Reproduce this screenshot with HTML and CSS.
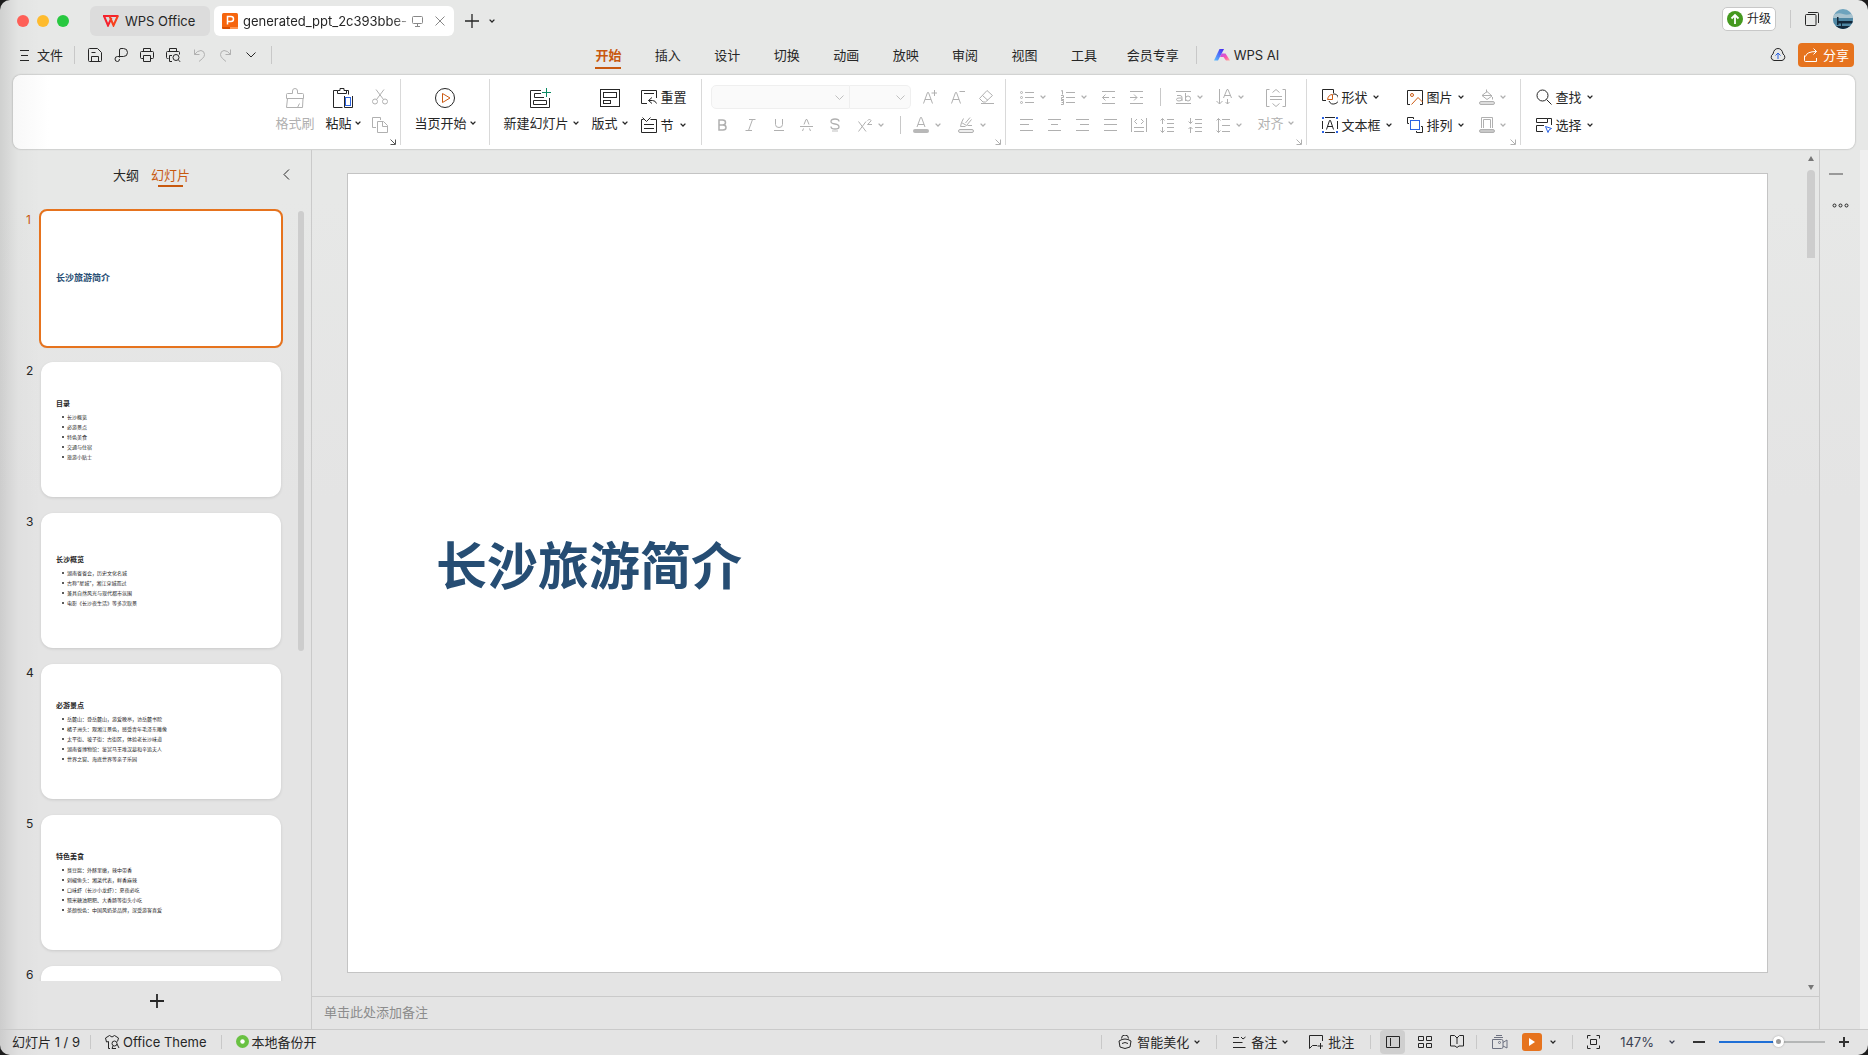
FILE: index.html
```html
<!DOCTYPE html>
<html lang="zh-CN">
<head>
    <meta charset="UTF-8">
    <meta name="viewport" content="width=device-width, initial-scale=1.0">
    <title>WPS Office</title>
    <link rel="stylesheet" href="styles.css">
</head>
<body>
    <!-- Shared icons -->
    <svg class="symbols" aria-hidden="true">
        <symbol id="chev" viewBox="0 0 6 6"><path d="M.6 1.6 3 4 5.4 1.6"/></symbol>
        <symbol id="launch" viewBox="0 0 6 6"><path d="M.5.5 5 5M5.5.5v5h-5"/></symbol>
    </svg>

    <div class="window">
        <!-- Title bar -->
        <header class="titlebar">
            <div class="lights">
                <button class="light red" aria-label="关闭"></button>
                <button class="light yellow" aria-label="最小化"></button>
                <button class="light green" aria-label="全屏"></button>
            </div>
            <button class="doc-tab home-tab">
                <svg width="16" height="12" viewBox="0 0 16 12"><g fill="none" stroke="#f5222d" stroke-width="2"><path d="M0 1h15.5"/><path d="M1 1l4 9.5L8.5 3"/><path d="M6.500 1l4 9.500L14.800 1" stroke="#f8401c"/></g></svg>
                WPS Office
            </button>
            <div class="doc-tab active">
                <svg width="16" height="16" viewBox="0 0 16 16"><rect width="16" height="16" rx="1.500" fill="#f6650d"/><path d="M0 14h8v2H1.500A1.500 1.500 0 0 1 0 14.500z" fill="#d94f00"/><path d="M8 14h8v.5a1.500 1.500 0 0 1-1.500 1.500H8z" fill="#ff944d"/><path d="M5.500 11.500v-8H9a2.250 2.250 0 0 1 0 5H5.500" fill="none" stroke="#fff" stroke-width="1.500"/></svg>
                <span class="doc-name">generated_ppt_2c393bbe-</span>
                <svg class="line muted" width="11" height="11" viewBox="0 0 11 11"><rect x=".5" y=".5" width="10" height="7" rx="1"/><path d="M5.500 7.500v2.500M3 10.500h5"/></svg>
                <button class="close" aria-label="关闭标签"><svg class="line muted" width="10" height="10" viewBox="0 0 10 10"><path d="M.5.5l9 9M9.500.5l-9 9"/></svg></button>
            </div>
            <div class="tab-tools">
                <button aria-label="新建"><svg class="line" width="14" height="14" viewBox="0 0 14 14"><path d="M7 0v14M0 7h14" stroke-width="1.300"/></svg></button>
                <button aria-label="标签列表"><svg class="chev"><use href="#chev"/></svg></button>
            </div>
            <div class="title-right">
                <button class="upgrade"><svg width="16" height="16" viewBox="0 0 16 16"><circle cx="8" cy="8" r="8" fill="#45991f"/><path d="M8 13V4M4.500 7.500 8 4l3.500 3.500" fill="none" stroke="#fff" stroke-width="1.800"/></svg>升级</button>
                <span class="vline"></span>
                <button aria-label="窗口"><svg class="line" width="14" height="14" viewBox="0 0 14 14"><rect x=".5" y="2.500" width="10.500" height="11" rx="1"/><path d="M3 .5h9.500q1 0 1 1V11"/></svg></button>
                <button aria-label="账户"><svg width="20" height="20" viewBox="0 0 20 20"><clipPath id="av"><circle cx="10" cy="10" r="10"/></clipPath><g clip-path="url(#av)"><path d="M0 0h20v20H0z" fill="#6ea3bd"/><path d="M0 6q5-3 10-1t10-1v5H0z" fill="#a9c3cf"/><path d="M0 9h20v11H0z" fill="#4f87a3"/><path d="M5 12h15v2.500H5zM4 8h1.500v8H4zM8 14h1v4H8zM0 17h20v3H0z" fill="#13283a"/></g></svg></button>
            </div>
        </header>

        <!-- Menu bar -->
        <div class="menubar">
            <div class="quick">
                <button class="file"><svg class="line" width="9" height="11" viewBox="0 0 9 11"><path d="M0 .5h9M1 5.500h7M0 10.500h9"/></svg>文件</button>
                <span class="vline"></span>
                <div class="quick-tools">
                    <button aria-label="保存"><svg class="line" width="14" height="14" viewBox="0 0 14 14"><path d="M1.500.5h8l4 4v8q0 1-1 1h-11q-1 0-1-1v-11q0-1 1-1zM3.500 13.500V8.500h7v5M3.500 4.500h4"/></svg></button>
                    <button aria-label="输出"><svg class="line" width="14" height="14" viewBox="0 0 14 14"><path d="M5.500 9.500V2q0-1.500 1.500-1.500h2.500a4 4 0 0 1 0 8h-6a2.200 2.200 0 0 0 0 5Q5.500 13.500 5.500 11"/></svg></button>
                    <button aria-label="打印"><svg class="line" width="14" height="14" viewBox="0 0 14 14"><path d="M3.500 3.500v-3h7v3M3.500 10.500h-2q-1 0-1-1v-5q0-1 1-1h11q1 0 1 1v5q0 1-1 1h-2M3.500 7.500h7v6h-7z"/></svg></button>
                    <button aria-label="打印预览"><svg class="line" width="15" height="14" viewBox="0 0 15 14"><path d="M3.500 3.500v-3h7v3M2.500 10.500h-1q-1 0-1-1v-5q0-1 1-1h11q1 0 1 1v2M6 13.500H3.500v-6H6M12.300 12l2.200 2"/><circle cx="10" cy="9.500" r="3"/></svg></button>
                    <button aria-label="撤销" disabled><svg class="line" width="11" height="13" viewBox="0 0 11 13"><path d="M.5.5v5h5M.5 5.500Q3.500 1.500 7 1.500q3.500.5 3.500 4 0 2-2 4L5 12.500"/></svg></button>
                    <button aria-label="恢复" disabled><svg class="line" width="11" height="13" viewBox="0 0 11 13"><path d="M10.500.5v5h-5M10.500 5.500Q7.500 1.500 4 1.500.500 2 .500 5.500q0 2 2 4L6 12.500"/></svg></button>
                    <button aria-label="更多"><svg class="line" width="10" height="6" viewBox="0 0 10 6"><path d="M.5.5 5 5 9.500.5"/></svg></button>
                </div>
                <span class="vline"></span>
            </div>
            <nav class="menu-tabs">
                <a href="#" class="on">开始</a>
                <a href="#">插入</a>
                <a href="#">设计</a>
                <a href="#">切换</a>
                <a href="#">动画</a>
                <a href="#">放映</a>
                <a href="#">审阅</a>
                <a href="#">视图</a>
                <a href="#">工具</a>
            </nav>
            <div class="menu-extra">
                <a href="#">会员专享</a>
                <span class="vline"></span>
                <a href="#" class="ai"><svg width="16" height="12" viewBox="0 0 16 12"><defs><linearGradient id="g1" x1="0" y1="1" x2="1" y2="0"><stop offset="0" stop-color="#5cc4ff"/><stop offset="1" stop-color="#4420f0"/></linearGradient><linearGradient id="g2" x1="0" y1="0" x2="1" y2="1"><stop offset="0" stop-color="#b44cf5"/><stop offset=".6" stop-color="#ff5aa8"/><stop offset="1" stop-color="#ffb09a"/></linearGradient></defs><path d="M5.500 0H10L4 11.500H0z" fill="url(#g1)"/><path d="M7.500 4.500h4L16 11.500h-4L9.500 8H6z" fill="url(#g2)"/></svg>WPS AI</a>
            </div>
            <div class="menu-right">
                <button aria-label="云同步"><svg class="line" width="16" height="14" viewBox="0 0 16 14"><path d="M4 12.500a3.500 3.500 0 0 1-1-6.500Q4 .5 8 .5T13 6a3.500 3.500 0 0 1-1 6.500z"/><path class="blue" d="M8 11V5M5.500 7.500 8 5l2.500 2.500"/></svg></button>
                <button class="share"><svg class="line" width="14" height="14" viewBox="0 0 14 14"><path d="M.5 7.500v5q0 1 1 1h11V10M1.500 8.500Q2.500 3.500 12.500 3.500M9.500.5l3 3-3 3"/></svg>分享</button>
            </div>
        </div>

        <!-- Ribbon -->
        <section class="ribbon">
            <div class="group clip">
                <button class="big" disabled><svg class="line" width="20" height="20" viewBox="0 0 20 20"><path d="M2.500 5.500h5V3a2.500 2.500 0 0 1 5 0v2.500h5q1 0 1 1v4h-17v-4q0-1 1-1zM2.500 10.500 1.500 19.500h16l.5-9M14.500 15.500l-2 4"/></svg><span>格式刷</span></button>
                <button class="big"><svg class="line" width="20" height="20" viewBox="0 0 20 20"><path d="M4.500 2.500h-4v17h9M15.500 2.500v4M15.500 2.500h-3M4.500 5.500v-3h2.500V.5h4v2h2.500v3z"/><path d="M11.500 8v11.500h8V8"/><rect class="blue" x="12.500" y="9.500" width="5" height="8"/></svg><span>粘贴<svg class="chev"><use href="#chev"/></svg></span></button>
                <div class="stack">
                    <button aria-label="剪切" disabled><svg class="line" width="16" height="16" viewBox="0 0 16 16"><path d="M4 .5l7.500 10M12 .5l-7.500 10"/><circle cx="3" cy="12.500" r="2.500"/><circle cx="13" cy="12.500" r="2.500"/></svg></button>
                    <button aria-label="复制" disabled><svg class="line" width="16" height="16" viewBox="0 0 16 16"><path d="M4 10.500H.5V.5h8V3M5.500 4.500h6l4 4v7h-10zM10.500 4.500v5h5"/></svg></button>
                </div>
                <button class="launcher on" aria-label="剪贴板设置"><svg><use href="#launch"/></svg></button>
            </div>
            <div class="group play">
                <button class="big"><svg class="line" width="20" height="20" viewBox="0 0 20 20"><circle cx="10" cy="10" r="9.500"/><path class="orange" d="M7.500 5.500v9l7.500-4.500z"/></svg><span>当页开始<svg class="chev"><use href="#chev"/></svg></span></button>
            </div>
            <div class="group slides">
                <button class="big"><svg class="line" width="21" height="20" viewBox="0 0 21 20"><path d="M11 2.500H.5v17h19V10M11 5.500H4.500v4H14M3.500 12.500h13v4h-13z"/><path class="teal" d="M16.500 0v9M12 4.500h9"/></svg><span>新建幻灯片<svg class="chev"><use href="#chev"/></svg></span></button>
                <button class="big"><svg class="line" width="20" height="20" viewBox="0 0 20 20"><rect x=".5" y="1.500" width="19" height="17"/><rect x="3.500" y="4.500" width="13" height="5"/><rect x="3.500" y="12.500" width="7" height="3"/></svg><span>版式<svg class="chev"><use href="#chev"/></svg></span></button>
                <div class="stack">
                    <button><svg class="line" width="16" height="16" viewBox="0 0 16 16"><path d="M6 14.500H.5v-13h15V9M3 4.500h10M7.500 11.500 11 8.500M7.500 11.500l3.500 3M7.500 11.500h4q3 0 4 3"/></svg>重置</button>
                    <button><svg class="line" width="16" height="16" viewBox="0 0 16 16"><path d="M2.500 2.500h-2v13h15v-13h-6M1.500.5l4 4 4-4M3 7.500h10M3 11.500h10"/></svg>节<svg class="chev"><use href="#chev"/></svg></button>
                </div>
            </div>
            <div class="group font">
                <div class="row">
                    <div class="picker family"><select aria-label="字体" disabled><option></option></select><svg class="line" width="9" height="5" viewBox="0 0 9 5"><path d="M.5.5l4 4 4-4"/></svg></div>
                    <div class="picker size"><select aria-label="字号" disabled><option></option></select><svg class="line" width="9" height="5" viewBox="0 0 9 5"><path d="M.5.5l4 4 4-4"/></svg></div>
                    <button class="cell" aria-label="增大字号" disabled><svg class="line" width="14" height="14" viewBox="0 0 14 14"><path d="M.5 13.500l4-11h1l4 11M2 9.500h6M11.500 0v6M8.500 3h6"/></svg></button>
                    <button class="cell" aria-label="减小字号" disabled><svg class="line" width="14" height="14" viewBox="0 0 14 14"><path d="M.5 13.500l4-11h1l4 11M2 9.500h6M8.500 1.500h5.500"/></svg></button>
                    <button class="cell" aria-label="清除格式" disabled><svg class="line" width="16" height="14" viewBox="0 0 16 14"><path d="M9 .5l5.500 5L7.500 12H5L1.500 8.500 9 .5zM4.500 5.500l5.500 5M3 13.500h13"/></svg></button>
                </div>
                <div class="row">
                    <button class="cell" aria-label="加粗" disabled><svg class="line" width="9" height="12" viewBox="0 0 9 12"><path stroke-width="1.500" d="M1 1v10h4q3 0 3-2.500T5 6H1h3.500q3 0 3-2.500T4.500 1z"/></svg></button>
                    <button class="cell" aria-label="倾斜" disabled><svg class="line" width="11" height="12" viewBox="0 0 11 12"><path d="M4 .5h6.500M.5 11.500H7M7.500.5l-4 11"/></svg></button>
                    <button class="cell" aria-label="下划线" disabled><svg class="line" width="10" height="12" viewBox="0 0 10 12"><path d="M1.500 0v5.500q0 3 3.500 3t3.500-3V0M0 11.500h10"/></svg></button>
                    <button class="cell" aria-label="删除线" disabled><svg class="line" width="13" height="12" viewBox="0 0 13 12"><path d="M0 7.500h13M4 5.500l2-5h1l2 5M3.500 9.500l-1 2.500M9.500 9.500l1 2.500"/></svg></button>
                    <button class="cell" aria-label="阴影" disabled><svg class="line" width="10" height="14" viewBox="0 0 10 14"><path stroke-width="1.300" d="M9 3.500Q9 1 5 1T1 3.500Q1 5.500 5 6t4 3Q9 11 5 11T1 8.500"/><path stroke-opacity=".4" stroke-width="2" d="M2 13h6"/></svg></button>
                    <button class="drop dd-wide" aria-label="上标" disabled><svg class="line" width="14" height="13" viewBox="0 0 14 13"><path d="M.5 2.500l7.500 10M8 2.500l-7.500 10M9.500 1.500q1-1 2-1t1.500 1q0 1-3.500 4H14"/></svg><svg class="chev"><use href="#chev"/></svg></button>
                    <span class="vline"></span>
                    <button class="drop dd-wide" aria-label="字体颜色" disabled><svg class="line" width="16" height="16" viewBox="0 0 16 16"><path d="M4 10l3.500-9.500h1L12 10M5 7.500h6"/><rect class="fill" x="0" y="12" width="16" height="4" rx="2"/></svg><svg class="chev"><use href="#chev"/></svg></button>
                    <button class="drop dd-wide" aria-label="突出显示" disabled><svg class="line" width="16" height="16" viewBox="0 0 16 16"><path d="M5.500 1.500l-2 4 5 3 5-6M3.500 5.500l-1 4h5M7.500 6l4.500-5.500M9.500 8.500H14"/><rect x=".5" y="12.500" width="15" height="3" rx="1.500" fill="#eee"/></svg><svg class="chev"><use href="#chev"/></svg></button>
                </div>
                <button class="launcher" aria-label="字体设置" disabled><svg><use href="#launch"/></svg></button>
            </div>
            <div class="group para">
                <div>
                    <div class="row">
                        <button class="drop" aria-label="项目符号" disabled><svg class="line" width="14" height="13" viewBox="0 0 14 13"><path d="M5 1.500h9M5 6.500h9M5 11.500h9"/><circle cx="1.500" cy="1.500" r="1"/><circle cx="1.500" cy="6.500" r="1"/><circle cx="1.500" cy="11.500" r="1"/></svg><svg class="chev"><use href="#chev"/></svg></button>
                        <button class="drop" aria-label="编号" disabled><svg class="line" width="14" height="15" viewBox="0 0 14 15"><path d="M5 2.500h9M5 7.500h9M5 12.500h9M0 1l1.500-.5v4M0 5.500h2.500v2H.5v2H3M0 10.500h2.500v4H0M.5 12.500h2"/></svg><svg class="chev"><use href="#chev"/></svg></button>
                        <button class="cell" aria-label="减少缩进" disabled><svg class="line" width="13" height="13" viewBox="0 0 13 13"><path d="M0 .5h13M0 12.500h13M.5 6.500H7M3.500 3.500l-3 3 3 3M10 6.500h3"/></svg></button>
                        <button class="cell" aria-label="增加缩进" disabled><svg class="line" width="13" height="13" viewBox="0 0 13 13"><path d="M0 .5h13M0 12.500h13M0 6.500h7M4 3.500l3 3-3 3M10 6.500h3"/></svg></button>
                        <span class="vline"></span>
                        <button class="drop" aria-label="文字效果" disabled><svg class="line" width="15" height="13" viewBox="0 0 15 13"><path d="M0 .5h15M0 12.500h15M1 4.500h3q2 0 2 2v3.500M6 7H3Q.5 7 .5 8.500T3 10q3 0 3-2M9.500 2v8"/><circle cx="12" cy="7.500" r="2.500"/></svg><svg class="chev"><use href="#chev"/></svg></button>
                        <button class="drop" aria-label="文字方向" disabled><svg class="line" width="16" height="16" viewBox="0 0 16 16"><path d="M3.500 0v15M.5 12l3 3 3-3M7.500 9l3.500-8.500h1L15.500 9M8.500 6.500h6M11.500 10v5M9.500 13l2 2 2-2"/></svg><svg class="chev"><use href="#chev"/></svg></button>
                    </div>
                    <div class="row">
                        <button class="cell" aria-label="左对齐" disabled><svg class="line" width="13" height="12" viewBox="0 0 13 12"><path d="M0 .5h13M0 5.500h9M0 11.500h13"/></svg></button>
                        <button class="cell" aria-label="居中" disabled><svg class="line" width="13" height="12" viewBox="0 0 13 12"><path d="M0 .5h13M3 5.500h7M0 11.500h13"/></svg></button>
                        <button class="cell" aria-label="右对齐" disabled><svg class="line" width="13" height="12" viewBox="0 0 13 12"><path d="M0 .5h13M4 5.500h9M0 11.500h13"/></svg></button>
                        <button class="cell" aria-label="两端对齐" disabled><svg class="line" width="13" height="12" viewBox="0 0 13 12"><path d="M0 .5h13M0 5.500h13M0 11.500h13"/></svg></button>
                        <button class="cell" aria-label="分散对齐" disabled><svg class="line" width="16" height="14" viewBox="0 0 16 14"><path d="M.5 0v14M15.500 0v14M3 9.500h10M3 13.500h10M6 1 3.500 3.500 6 6M10 1l2.500 2.500L10 6"/></svg></button>
                        <button class="cell" aria-label="增加段距" disabled><svg class="line" width="14" height="15" viewBox="0 0 14 15"><path d="M2.500 6V.5M.5 2.500l2-2 2 2M2.500 9v5.500M.5 12.500l2 2 2-2M7 1.500h7M7 5.500h7M7 9.500h7M7 13.500h7"/></svg></button>
                        <button class="cell" aria-label="减少段距" disabled><svg class="line" width="14" height="15" viewBox="0 0 14 15"><path d="M2.500 0v5.500M.5 3.500l2 2 2-2M2.500 15V9M.5 11l2-2 2 2M7 1.500h7M7 5.500h7M7 9.500h7M7 13.500h7"/></svg></button>
                        <button class="drop" aria-label="行距" disabled><svg class="line" width="14" height="15" viewBox="0 0 14 15"><path d="M2.500.5v14M.5 2.500l2-2 2 2M.5 12.500l2 2 2-2M6 1.500h8M6 7.500h8M6 13.500h8"/></svg><svg class="chev"><use href="#chev"/></svg></button>
                    </div>
                </div>
                <button class="big" disabled><svg class="line" width="20" height="18" viewBox="0 0 20 18"><path d="M3.500.5h-3v17h3M16.500.5h3v17h-3M6.500 3.500l3.500-3 3.500 3M6.500 14.500l3.500 3 3.500-3M4 7.500h12M4 10.500h12"/></svg><span>对齐<svg class="chev"><use href="#chev"/></svg></span></button>
                <button class="launcher" aria-label="段落设置" disabled><svg><use href="#launch"/></svg></button>
            </div>
            <div class="group insert">
                <button><svg class="line" width="16" height="16" viewBox="0 0 16 16"><path d="M4 11.500H.5V.5h11V4M7 12a5 5 0 1 0 4-7"/><path class="orange" d="M5.500 10.500h5v-5q-4 0-5 5z"/></svg>形状<svg class="chev"><use href="#chev"/></svg></button>
                <button><svg class="line" width="16" height="15" viewBox="0 0 16 15"><path d="M3 14.500H.5V.5h15v14H13"/><circle class="orange" cx="5" cy="5" r="1.500"/><path class="orange" d="M4.500 14.500l6.500-7 4.500 4.500"/></svg>图片<svg class="chev"><use href="#chev"/></svg></button>
                <button aria-label="填充" disabled><svg class="line" width="16" height="16" viewBox="0 0 16 16"><path d="M7.500.5v3M8 2.500l5 4.500-5 3.500-5-4zM3 6.500h10M13.500 8v2.500"/><rect x=".5" y="12.500" width="15" height="3" rx="1.500" fill="#ddd"/></svg><svg class="chev"><use href="#chev"/></svg></button>
                <button><svg class="line" width="16" height="16" viewBox="0 0 16 16"><path d="M3 .5h10M3 15.500h10M.5 4v8M15.500 4v8M4.500 12.500l3-9h1l3 9M5.500 9.500h5"/><path class="dots" d="M0 0h2v2H0zM14 0h2v2h-2zM0 14h2v2H0zM14 14h2v2h-2z"/></svg>文本框<svg class="chev"><use href="#chev"/></svg></button>
                <button><svg class="line" width="16" height="16" viewBox="0 0 16 16"><path d="M2 6.500H.5v-6h6v1.500M9.500 14v1.500h6v-6H14"/><rect class="blue" x="3.500" y="3.500" width="9" height="9"/></svg>排列<svg class="chev"><use href="#chev"/></svg></button>
                <button aria-label="轮廓" disabled><svg class="line" width="16" height="16" viewBox="0 0 16 16"><path d="M2.500 11V.5h11V11M4.500 11V2.500h7V11"/><rect x=".5" y="12.500" width="15" height="3" rx="1.500" fill="#c8c8c8"/></svg><svg class="chev"><use href="#chev"/></svg></button>
                <button class="launcher" aria-label="对象设置" disabled><svg><use href="#launch"/></svg></button>
            </div>
            <div class="group edit">
                <button><svg class="line" width="16" height="16" viewBox="0 0 16 16"><circle cx="6.500" cy="6.500" r="5.500"/><path d="M10.500 10.500l5 5"/></svg>查找<svg class="chev"><use href="#chev"/></svg></button>
                <button><svg class="line" width="16" height="16" viewBox="0 0 16 16"><path d="M.5 5.500v-4h11v4zM11.500 1.500h4V8M7 14.500H.5v-6H8"/><path class="blue" d="M9.500 9.500l6 2-2.500 1.500-1 2.500z"/></svg>选择<svg class="chev"><use href="#chev"/></svg></button>
            </div>
        </section>

        <main class="workspace">
            <!-- Thumbnail panel -->
            <aside class="panel">
                <div class="panel-head">
                    <div class="panel-tabs">
                        <button>大纲</button>
                        <button class="on">幻灯片</button>
                    </div>
                    <button class="collapse" aria-label="收起"><svg class="line" width="7" height="11" viewBox="0 0 7 11"><path d="M6 .5l-5 5 5 5"/></svg></button>
                </div>
                <div class="panel-body">
                    <ol class="thumbs">
                        <li class="on"><span class="num">1</span>
                            <div class="thumb"><h1>长沙旅游简介</h1></div>
                        </li>
                        <li><span class="num">2</span>
                            <div class="thumb">
                                <h2>目录</h2>
                                <ul><li>长沙概览</li><li>必游景点</li><li>特色美食</li><li>交通与住宿</li><li>旅游小贴士</li></ul>
                            </div>
                        </li>
                        <li><span class="num">3</span>
                            <div class="thumb">
                                <h2>长沙概览</h2>
                                <ul><li>湖南省省会，历史文化名城</li><li>古称“星城”，湘江穿城而过</li><li>兼具自然风光与现代都市氛围</li><li>电影《长沙夜生活》等多次取景</li></ul>
                            </div>
                        </li>
                        <li><span class="num">4</span>
                            <div class="thumb">
                                <h2>必游景点</h2>
                                <ul><li>岳麓山：登岳麓山，游爱晚亭，访岳麓书院</li><li>橘子洲头：观湘江景色，感受青年毛泽东雕像</li><li>太平街、坡子街：古街区，体验老长沙味道</li><li>湖南省博物馆：鉴赏马王堆汉墓和辛追夫人</li><li>世界之窗、海底世界等亲子乐园</li></ul>
                            </div>
                        </li>
                        <li><span class="num">5</span>
                            <div class="thumb">
                                <h2>特色美食</h2>
                                <ul><li>臭豆腐：外酥里嫩，辣中带香</li><li>剁椒鱼头：湘菜代表，鲜香麻辣</li><li>口味虾（长沙小龙虾）：夏夜必吃</li><li>糯米糖油粑粑、大香肠等街头小吃</li><li>茶颜悦色：中国风奶茶品牌，深受游客喜爱</li></ul>
                            </div>
                        </li>
                        <li><span class="num">6</span><div class="thumb"></div></li>
                    </ol>
                    <div class="panel-scroll"></div>
                </div>
                <button class="add" aria-label="新建幻灯片"><svg class="line" width="14" height="14" viewBox="0 0 14 14"><path d="M7 0v14M0 7h14" stroke-width="1.800"/></svg></button>
            </aside>

            <!-- Slide canvas -->
            <div class="editor">
                <div class="stage">
                    <div class="canvas"><div class="slide"><h1>长沙旅游简介</h1></div></div>
                    <div class="vscroll">
                        <svg width="6" height="5" viewBox="0 0 6 5"><path d="M3 0l3 5H0z" fill="#777"/></svg>
                        <div class="track"></div>
                        <svg width="6" height="5" viewBox="0 0 6 5"><path d="M3 5 0 0h6z" fill="#777"/></svg>
                    </div>
                </div>
                <textarea class="notes" rows="1" aria-label="备注" placeholder="单击此处添加备注"></textarea>
            </div>

            <div class="side">
                <button aria-label="收起侧栏"><svg width="14" height="2"><path d="M0 1h14" stroke="#999" stroke-width="2"/></svg></button>
                <button aria-label="更多"><svg class="line" width="17" height="5" viewBox="0 0 17 5"><circle cx="2.500" cy="2.500" r="1.500"/><circle cx="8.500" cy="2.500" r="1.500"/><circle cx="14.500" cy="2.500" r="1.500"/></svg></button>
            </div>
            <div class="edge"></div>
        </main>

        <!-- Status bar -->
        <footer class="status">
            <div class="status-left">
                <span>幻灯片 1 / 9</span>
                <span class="vline"></span>
                <button><svg class="line" width="15" height="14" viewBox="0 0 15 14"><path d="M5 13.500H3.500V6.500l-2 .5-1-4 4-2.500q2.500 3 5 0l4 2.500-1 3.500M12 9l2 4"/><circle cx="9.500" cy="8.500" r="2.500"/><path d="M8 11l-1 2.500h4"/></svg>Office Theme</button>
                <span class="vline"></span>
                <button class="backup"><svg width="13" height="13" viewBox="0 0 13 13"><circle cx="6.500" cy="6.500" r="6.500" fill="#69c142"/><circle cx="6.500" cy="6.500" r="2.200" fill="#fff"/></svg>本地备份开</button>
            </div>
            <div class="status-right">
                <span class="vline"></span>
                <button><svg class="line" width="14" height="14" viewBox="0 0 14 14"><path d="M3.500 3.500a3.500 3.500 0 0 1 7 0M1 6q6-4 12 0L12 12q-5 3-10 0zM4 8.500q3-2 6 0"/></svg>智能美化<svg class="chev"><use href="#chev"/></svg></button>
                <span class="vline"></span>
                <button><svg class="line" width="13" height="12" viewBox="0 0 13 12"><path d="M0 1.500h6M8 1l2 2 2.500-2M0 6.500h9.500M0 11.500h12.500"/></svg>备注<svg class="chev"><use href="#chev"/></svg></button>
                <button class="comment"><svg class="line" width="14" height="14" viewBox="0 0 14 14"><path d="M13.500 6V.5H.5v13l3-3H8M11.500 8v6M8.500 11h5.500"/></svg>批注</button>
                <span class="vline"></span>
                <div class="views">
                    <button class="on" aria-label="普通视图"><svg class="line" width="14" height="12" viewBox="0 0 14 12"><path d="M.5.5h13v11H.5zM4.500 2v8"/></svg></button>
                    <button aria-label="幻灯片浏览"><svg class="line" width="14" height="12" viewBox="0 0 14 12"><path d="M.5.5h5v4h-5zM8.500.5h5v4h-5zM.5 7.500h5v4h-5zM8.500 7.500h5v4h-5z"/></svg></button>
                    <button aria-label="阅读视图"><svg class="line" width="14" height="13" viewBox="0 0 14 13"><path d="M7 12.500 5 11H.5V.5h4L7 3 9.500.5h4V11H9zM7 3v6"/></svg></button>
                </div>
                <span class="vline"></span>
                <button class="rec" aria-label="录制"><svg class="line" width="16" height="14" viewBox="0 0 16 14"><path d="M.5 4.500h9q1.500 0 1.500 1.500v6q0 1.500-1.500 1.500h-9zM11 7.500l4-2.500v8l-4-2M2 2.500h9M4 .5h6"/><circle cx="7.500" cy="7.500" r="1"/></svg></button>
                <button class="show" aria-label="放映"><svg width="6" height="8" viewBox="0 0 6 8"><path d="M0 0l6 4-6 4z" fill="#fff"/></svg></button>
                <button aria-label="放映选项"><svg class="chev"><use href="#chev"/></svg></button>
                <span class="vline"></span>
                <button class="fit" aria-label="适应窗口"><svg class="line" width="13" height="14" viewBox="0 0 13 14"><path d="M3.500.5h-3v3M9.500.5h3v3M3.500 13.500h-3v-3M9.500 13.500h3v-3M3.500 4.500h6v5h-6z"/></svg></button>
                <button class="zoom">147%<svg class="chev"><use href="#chev"/></svg></button>
                <div class="zoombar">
                    <button aria-label="缩小"><svg width="12" height="12"><path d="M0 6h12" stroke="#333" stroke-width="2"/></svg></button>
                    <input type="range" min="0" max="100" value="57" aria-label="缩放">
                    <button aria-label="放大"><svg width="10" height="10"><path d="M0 5h10M5 0v10" stroke="#333" stroke-width="2"/></svg></button>
                </div>
            </div>
        </footer>
    </div>
</body>
</html>
```

FILE: styles.css
```css
* { box-sizing: border-box; }

body {
    margin: 0;
    background: #1c1c1c;
    font-family: Inter, "Noto Sans CJK SC", sans-serif;
    font-size: 13px;
    line-height: 20px;
    color: #262626;
}

button {
    display: inline-flex;
    align-items: center;
    padding: 0;
    border: none;
    background: none;
    font: inherit;
    color: inherit;
    white-space: nowrap;
}

button:disabled { color: #b0b0b0; }

a { color: inherit; text-decoration: none; }

svg { display: block; flex: none; }

.symbols { display: none; }

.line { fill: none; stroke: currentColor; }
.line .blue { stroke: #2b63e3; }
.line .orange { stroke: #cc5a12; }
.line .teal { stroke: #0b8a63; }
.line .fill { fill: #b8b8b8; stroke: none; }
.line .dots { fill: #2b63e3; stroke: none; }
.muted { color: #888; }

.chev {
    width: 6px;
    height: 6px;
    margin-left: 4px;
    fill: none;
    stroke: currentColor;
    stroke-width: 1.3;
}

.vline { width: 1px; height: 18px; background: #c8c8c8; }

.window {
    display: flex;
    flex-direction: column;
    height: 100vh;
    border-radius: 10px;
    overflow: hidden;
    background:
        linear-gradient(90deg, rgba(0, 0, 0, 0.1), rgba(0, 0, 0, 0.02) 18px, transparent 40px),
        linear-gradient(#e7e8e7, #e7e8e7 200px, #e4e4e4 500px);
}

/* Title bar */
.titlebar {
    display: flex;
    align-items: center;
    height: 42px;
    padding: 0 15px 0 17px;
}

.lights { display: flex; gap: 8px; width: 73px; }
.light { width: 12px; height: 12px; border-radius: 50%; }
.red { background: #fe5f57; }
.yellow { background: #febb2e; }
.green { background: #28c840; }

.doc-tab {
    display: flex;
    align-items: center;
    height: 30px;
    border-radius: 6px;
}

.home-tab {
    width: 120px;
    padding-left: 13px;
    gap: 6px;
    background: #dcdcdc;
}

.active {
    width: 240px;
    margin-left: 4px;
    padding: 0 11px 0 8px;
    gap: 5px;
    background: #fff;
}

.doc-name {
    flex: 1;
    white-space: nowrap;
    mask-image: linear-gradient(90deg, #000 150px, rgba(0, 0, 0, 0.4) 164px);
}

.close { margin-left: 7px; }

.tab-tools { display: flex; gap: 6px; margin-left: 11px; }

.title-right { display: flex; align-items: center; align-self: flex-start; gap: 14px; height: 38px; margin-left: auto; }

.upgrade {
    height: 24px;
    padding: 0 4px;
    gap: 4px;
    font-size: 12px;
    background: #fff;
    border: 1px solid #c8c8c8;
    border-radius: 5px;
}

/* Menu bar */
.menubar {
    display: flex;
    align-items: center;
    height: 26px;
    margin-bottom: 7px;
    padding-right: 14px;
}

.quick {
    flex: 1;
    display: flex;
    align-items: center;
    padding-left: 20px;
}
.file { width: 54px; gap: 8px; }
.quick-tools { display: flex; align-items: center; width: 196px; padding-left: 7px; }
.quick-tools button { justify-content: center; width: 26px; height: 26px; }

.menu-tabs { display: grid; grid-template-columns: repeat(9, 1fr); width: 535px; text-align: center; }
.menu-tabs .on { color: #c8590f; font-weight: 700; }
.menu-tabs .on::after {
    content: "";
    display: block;
    width: 26px;
    height: 2px;
    margin: 2px auto -4px;
    background: #c8590f;
}

.menu-extra { display: flex; align-items: center; gap: 17px; padding-left: 13px; margin-right: 16px; }
.ai { display: flex; align-items: center; gap: 4px; }

.menu-right { flex: 1; display: flex; align-items: center; justify-content: flex-end; gap: 12px; }
.share {
    height: 24px;
    padding: 0 5px 0 6px;
    gap: 5px;
    border-radius: 4px;
    background: #e6731e;
    color: #fff;
}

/* Ribbon */
.ribbon {
    display: flex;
    justify-content: center;
    height: 74px;
    margin: 0 13px 1px;
    border-radius: 8px;
    background: linear-gradient(90deg, #f8f8f8, #fff 36px);
    box-shadow: 0 0 2px rgba(0, 0, 0, 0.35);
}

.group {
    position: relative;
    display: flex;
    margin: 4px 0;
    padding-top: 4px;
    border-right: 1px solid #d9d9d9;
}

.big { flex-direction: column; height: 56px; padding-top: 5px; gap: 5px; }
.big svg.line { height: 20px; }
.big span { display: flex; align-items: center; }

.stack { display: flex; flex-direction: column; }
.stack button { height: 28px; gap: 4px; }
.stack .chev { margin-left: 2px; }

.clip { padding-right: 12px; gap: 11px; }
.play { padding: 4px 13px 0; }
.slides { padding: 4px 14px 0 13px; gap: 13px; }

.launcher { position: absolute; right: 4px; bottom: 0; }
.launcher svg { width: 6px; height: 6px; fill: none; stroke: #b0b0b0; }
.launcher.on svg { stroke: #555; }

.row { display: flex; align-items: center; height: 28px; }
.cell { justify-content: center; width: 28px; height: 28px; }
.drop { justify-content: center; width: 41px; height: 28px; }
.drop .chev { margin-left: 6px; }
.dd-wide { width: 45px; }
.row .vline { margin: 0 8px 0 9px; }

.font { flex-direction: column; padding-left: 7px; width: 304px; }
.font .vline { margin: 0 4px 0 6px; }

.picker { display: grid; align-items: center; height: 24px; }
.picker select {
    grid-area: 1 / 1;
    width: 100%;
    height: 24px;
    appearance: none;
    background: #f8f8f8;
    border: 1px solid #e9e9e9;
}
.picker svg { grid-area: 1 / 1; justify-self: end; margin-right: 6px; color: #c0c0c0; z-index: 1; }
.family { width: 139px; margin-left: 2px; }
.family select { border-radius: 5px 0 0 5px; }
.size { width: 61px; margin-right: 5px; }
.size select { border-left: none; border-radius: 0 5px 5px 0; }

.para { padding-left: 7px; width: 301px; gap: 7px; }

.insert {
    display: grid;
    grid-template-columns: 85px 72px 41px;
    grid-template-rows: 28px 28px;
    padding-left: 15px;
}
.insert button, .edit button { gap: 4px; }
.insert .chev, .edit .chev { margin-left: 1px; }
.edit { flex-direction: column; padding-left: 15px; border: none; }
.edit button { height: 28px; }

/* Workspace */
.workspace { flex: 1; display: flex; min-height: 0; }

.panel {
    display: flex;
    flex-direction: column;
    width: 312px;
    border-right: 1px solid #cacaca;
}

.panel-head {
    display: flex;
    align-items: center;
    height: 49px;
    padding: 0 21px 0 113px;
}
.panel-tabs { display: flex; flex: 1; gap: 12px; }
.panel-tabs .on { position: relative; color: #c8590f; }
.panel-tabs .on::after {
    content: "";
    position: absolute;
    left: 7px;
    right: 7px;
    bottom: -2px;
    height: 2px;
    background: #c8590f;
}

.panel-body { flex: 1; display: flex; min-height: 0; padding-top: 10px; }

.thumbs {
    flex: 1;
    display: flex;
    flex-direction: column;
    gap: 16px;
    margin: 0;
    padding: 2px 0 0 24px;
    list-style: none;
    overflow: hidden;
}
.thumbs > li { display: flex; }
.num { width: 17px; padding-left: 2px; font-size: 12px; line-height: 18px; }
.thumbs .on .num { color: #c8590f; }

.thumb {
    display: flex;
    flex-direction: column;
    justify-content: center;
    width: 240px;
    height: 135px;
    flex: none;
    padding-left: 15px;
    border-radius: 12px;
    background: #fff;
    box-shadow: 0 1px 3px rgba(0, 0, 0, 0.12);
}
.on .thumb { border-radius: 6px; outline: 2px solid #e6731e; }
.thumb h1 { margin: 0 0 2px; font-size: 9px; line-height: 12px; color: #264d73; }
.thumb h2 { margin: 0 0 1px; font-size: 7px; line-height: 14px; }
.thumb ul {
    margin: 0;
    padding-left: 6px;
    list-style: none;
    font-size: 5px;
    line-height: 10px;
}
.thumb ul li { display: flex; align-items: center; gap: 3px; }
.thumb ul li::before {
    content: "";
    width: 2px;
    height: 2px;
    border-radius: 1px;
    background: #262626;
}

.panel-scroll { width: 6px; height: 440px; margin: 2px 7px 0 0; border-radius: 3px; background: #cdcdcd; }

.add { align-self: center; height: 40px; margin: 0 0 8px 2px; }

.editor { flex: 1; display: flex; flex-direction: column; min-width: 0; border-right: 1px solid #cacaca; }
.stage { flex: 1; display: flex; min-height: 0; }
.canvas { flex: 1; padding: 23px 35px; }

.slide {
    display: flex;
    align-items: center;
    height: 100%;
    padding: 0 0 12px 88px;
    background: #fff;
    border: 1px solid #c4c4c4;
}
.slide h1 { margin: 0; font-size: 51px; line-height: 64px; color: #264d73; }

.vscroll { display: flex; flex-direction: column; align-items: center; width: 16px; padding: 6px 0; }
.track { flex: 1; width: 8px; margin-top: 9px; background: linear-gradient(#cdcdcd, #cdcdcd) no-repeat; background-size: 8px 88px; border-radius: 4px; }

.notes {
    height: 33px;
    padding: 5px 12px;
    border: none;
    border-top: 1px solid #cacaca;
    background: none;
    font: inherit;
    resize: none;
    outline: none;
}
.notes::placeholder { color: #8c8c8c; }

.side { display: flex; flex-direction: column; align-items: center; width: 40px; padding-top: 23px; gap: 28px; }
.side button:first-child { margin-right: 8px; }
.edge { width: 8px; background: #efefef; }

/* Status bar */
.status {
    display: flex;
    justify-content: space-between;
    height: 26px;
    padding: 0 19px 2px 12px;
    border-top: 1px solid #cacaca;
}
.status-left, .status-right { display: flex; align-items: center; }
.status .vline { height: 14px; }
.status-left { gap: 14px; }
.status-left > span:first-child { margin-right: -4px; }
.status-left button { gap: 3px; }

.status-right { gap: 16px; }
.status-right button { gap: 5px; }
.status-right .chev { margin-left: 0; }
.comment { margin-left: 5px; }

.views { display: flex; gap: 7px; margin: 0 -9px 0 -7px; }
.views button { justify-content: center; width: 25px; height: 24px; border-radius: 4px; }
.views .on { background: #cfcfcf; }

.rec { color: #6d7180; margin: 0 -2px 0 -1px; }
.show { justify-content: center; width: 20px; height: 18px; margin-right: -8px; border-radius: 3px; background: #e6731e; }
.fit { margin-left: -2px; }
.zoom { color: #3a3f52; margin: 0 2px 0 4px; }
.status-right .zoom { gap: 15px; }
.zoombar { display: flex; align-items: center; gap: 14px; }

input[type="range"] {
    width: 106px;
    height: 12px;
    margin: 0;
    appearance: none;
    background: linear-gradient(90deg, #1f6fd6 57%, #b4b6b6 57%) center / 100% 2px no-repeat;
}
input[type="range"]::-webkit-slider-thumb {
    appearance: none;
    width: 11px;
    height: 11px;
    border-radius: 50%;
    border: 3px solid #fff;
    background: #999;
    box-shadow: 0 0 2px rgba(0, 0, 0, 0.3);
}
```
